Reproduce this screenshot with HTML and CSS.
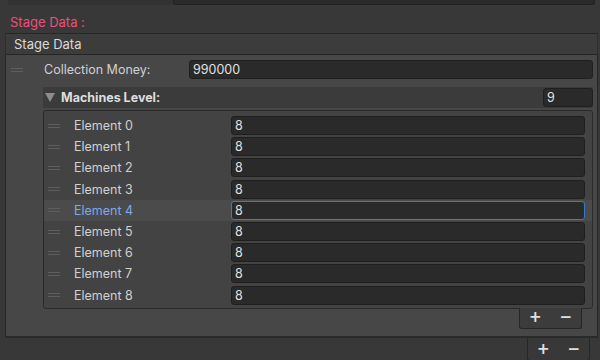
FILE: index.html
```html
<!DOCTYPE html>
<html lang="en">
<head>
    <meta charset="UTF-8">
    <meta name="viewport" content="width=device-width, initial-scale=1.0">
    <title>Inspector - Stage Data</title>
    <link rel="stylesheet" href="styles.css">
</head>
<body>
    <div class="prev-row">
        <span class="prev-label"></span>
        <span class="prev-field"></span>
    </div>

    <div class="section-label">Stage Data :</div>

    <div class="foldout">
        <div class="foldout-head">Stage Data</div>
        <div class="foldout-body">
            <div class="prop-row">
                <span class="handle"></span>
                <span class="prop-label">Collection Money:</span>
                <span class="field wide">990000</span>
            </div>

            <div class="list-head">
                <span class="arrow"></span>
                <span class="list-title">Machines Level:</span>
                <span class="field size">9</span>
            </div>

            <div class="list">
                <div class="item"><span class="handle"></span><span class="item-label">Element 0</span><span class="field">8</span></div>
                <div class="item"><span class="handle"></span><span class="item-label">Element 1</span><span class="field">8</span></div>
                <div class="item"><span class="handle"></span><span class="item-label">Element 2</span><span class="field">8</span></div>
                <div class="item"><span class="handle"></span><span class="item-label">Element 3</span><span class="field">8</span></div>
                <div class="item selected"><span class="handle"></span><span class="item-label">Element 4</span><span class="field">8</span></div>
                <div class="item"><span class="handle"></span><span class="item-label">Element 5</span><span class="field">8</span></div>
                <div class="item"><span class="handle"></span><span class="item-label">Element 6</span><span class="field">8</span></div>
                <div class="item"><span class="handle"></span><span class="item-label">Element 7</span><span class="field">8</span></div>
                <div class="item"><span class="handle"></span><span class="item-label">Element 8</span><span class="field">8</span></div>
            </div>
            <div class="footer-wrap inner">
                <div class="pm-box"><span class="pm">+</span><span class="pm">&minus;</span></div>
            </div>
        </div>
    </div>
    <div class="footer-wrap outer">
        <div class="pm-box"><span class="pm">+</span><span class="pm">&minus;</span></div>
    </div>
</body>
</html>
```

FILE: styles.css
```css
body {
    margin: 0;
    background-color: #383838;
    font-family: Inter, "Noto Sans", sans-serif;
    font-size: 12px;
    color: #d0d0d0;
    overflow: hidden;
}
.prev-row {
    display: flex;
    height: 5px;
    margin-left: 8px;
}
.prev-label {
    width: 165px;
    background-color: #323232;
}
.prev-field {
    width: 422px;
    background-color: #2a2a2a;
    border: 1px solid #212121;
    border-top: none;
    border-radius: 0 0 3px 3px;
    box-sizing: border-box;
}
.section-label {
    height: 28px;
    line-height: 35px;
    padding-left: 10px;
    font-size: 13px;
    color: #ea4f7c;
}
.foldout {
    margin: 0 2px 0 5px;
}
.foldout-head {
    height: 20px;
    line-height: 20px;
    padding-left: 8px;
    background-color: #3c3c3c;
    border-top: 1px solid #262626;
    border-left: 1px solid #2f2f2f;
    border-right: 1px solid #2f2f2f;
    color: #dadada;
    font-size: 13px;
}
.foldout-body {
    background-color: #474747;
    border: 1px solid #262626;
    border-bottom: 2px solid #2a2a2a;
    padding: 4px 4px 0 37px;
    height: 277px;
}
.handle {
    display: inline-block;
    width: 12px;
    height: 4px;
    border-top: 1px solid #5e5e5e;
    border-bottom: 1px solid #5e5e5e;
    box-sizing: border-box;
    flex: none;
}
.prop-row {
    display: flex;
    align-items: center;
    height: 21px;
    position: relative;
}
.prop-row .handle {
    position: absolute;
    left: -32px;
}
.prop-label {
    width: 145px;
    padding-left: 1px;
    font-size: 12.5px;
}
.field {
    display: flex;
    align-items: center;
    height: 19px;
    padding-left: 3px;
    background-color: #2a2a2a;
    border: 1px solid #1f1f1f;
    border-radius: 3px;
    box-sizing: border-box;
    color: #e0e0e0;
    font-size: 12.5px;
}
.wide {
    flex: 1;
}
.list-head {
    display: flex;
    align-items: center;
    height: 21px;
    margin-top: 7px;
    padding-left: 2px;
    background-color: #3b3b3b;
}
.arrow {
    width: 0;
    height: 0;
    border-left: 5px solid transparent;
    border-right: 5px solid transparent;
    border-top: 9px solid #8c8c8c;
    margin-right: 6px;
}
.list-title {
    flex: 1;
    font-weight: 700;
    color: #dedede;
    font-size: 12.5px;
}
.size {
    width: 50px;
    height: 19px;
}
.list {
    margin-top: 2px;
    padding: 4px 7px 2px 0;
    background-color: #434343;
    border: 1px solid #2a2a2a;
    border-radius: 3px;
}
.item {
    display: flex;
    align-items: center;
    height: 21.2px;
    padding-left: 4px;
}
.item .handle {
    margin-right: 14px;
}
.item-label {
    width: 157px;
    font-size: 12.5px;
}
.item .field {
    flex: 1;
}
.item.selected {
    background-color: #4b4b4b;
    margin-right: -7px;
    padding-right: 7px;
}
.selected .item-label {
    color: #7ba9ea;
}
.selected .field {
    border-color: #3d7ac0;
}
.footer-wrap {
    display: flex;
    justify-content: flex-end;
}
.footer-wrap.inner {
    padding-right: 11px;
    margin-top: -1px;
}
.footer-wrap.outer {
    padding-right: 10px;
}
.pm-box {
    display: flex;
    justify-content: space-around;
    align-items: center;
    width: 61px;
    height: 20px;
    background-color: #3c3c3c;
    border: 1px solid #262626;
    border-top: none;
    border-radius: 0 0 3px 3px;
}
.outer .pm-box {
    height: 22px;
    background-color: #383838;
}
.pm {
    font-family: "DejaVu Sans", sans-serif;
    font-size: 15px;
    font-weight: 700;
    color: #e0e0e0;
    line-height: 1;
}
```
